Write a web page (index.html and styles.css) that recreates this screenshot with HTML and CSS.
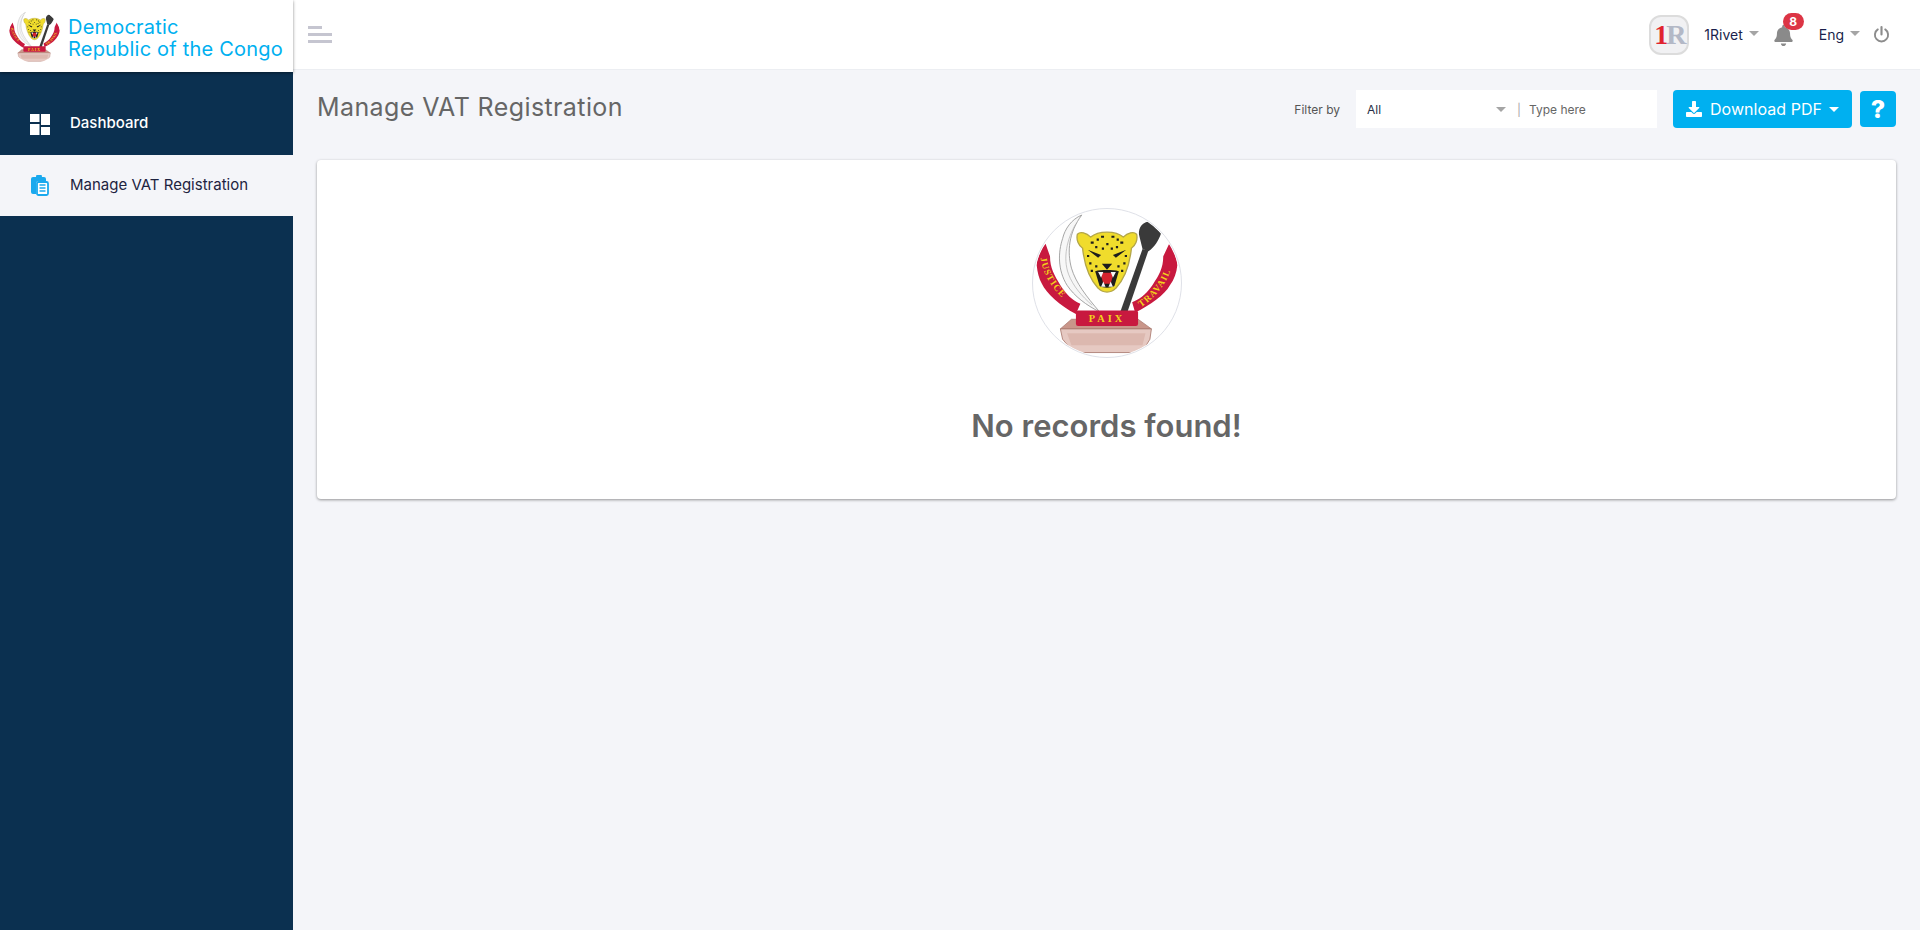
FILE: index.html
```html
<!DOCTYPE html>
<html lang="en">
<head>
<meta charset="utf-8">
<title>Manage VAT Registration</title>
<link rel="stylesheet" href="styles.css">
</head>
<body>
<svg class="defs" width="0" height="0" aria-hidden="true">
  <defs>
    <clipPath id="emblem-clip"><circle cx="100" cy="100" r="99"/></clipPath>
    <path id="justice-line" d="M10 60C10 85 26 112 58 136"/>
    <path id="travail-line" d="M141 136C170 118 190 90 190 60"/>
    <symbol id="emblem" viewBox="0 0 200 200">
      <g clip-path="url(#emblem-clip)">
        <path d="M66 8C52 14 43 27 40 40C34 58 33 82 46 103C56 118 72 130 90 139C72 118 58 100 52 80C46 58 48 32 66 8Z" fill="#f7f7f7" stroke="#9b9b9b" stroke-width="1.200"/>
        <path d="M58 20C46 40 40 66 48 88C54 104 66 118 80 130" fill="none" stroke="#b5b5b5" stroke-width="1"/>
        <path d="M118 139L148 54L156 56L127 141Z" fill="#3a3a3a"/>
        <path d="M156 17C146 19 141 28 144 38L148 54L156 57C164 52 170 42 173 33C168 28 163 21 156 17Z" fill="#3a3a3a"/>
        <path d="M17 47C10 55 6 65 5 76C6 86 8 94 12 101C18 114 36 130 58 142L64 128C52 123 45 115 37 103C29 90 23 80 23 64Z" fill="#c8193f"/>
        <path d="M184 47C190 55 194 65 195 76C194 86 191 95 185 103C178 116 158 130 138 140L134 126C148 120 155 112 162 102C170 90 176 80 176 64Z" fill="#c8193f"/>
        <path d="M60 34C64 30 72 32 78 38C88 29 112 29 122 38C128 32 136 30 140 34C142 42 138 50 133 53C131 72 126 92 112 107C106 114 94 114 88 107C75 93 69 72 67 53C62 50 58 42 60 34Z" fill="#f0dc2c" stroke="#b3a64a" stroke-width="1.800"/>
        <path d="M74 55L92 62L88 66ZM126 55L108 62L112 66ZM93 74H107L100 82Z" fill="#1d1d1d"/>
        <path d="M78 44h4v3h-4zM86 40h3v3h-3zM92 36h4v3h-4zM106 36h4v3h-4zM113 40h3v3h-3zM118 44h4v3h-4zM84 50h3v3h-3zM112 50h3v3h-3zM99 46h3v3h-3zM93 52h3v3h-3zM105 52h3v3h-3zM76 72h3v3h-3zM122 72h3v3h-3zM84 76h3v3h-3zM114 76h3v3h-3zM73 62h3v3h-3zM124 62h3v3h-3zM78 82h3v3h-3zM119 82h3v3h-3z" fill="#1d1d1d"/>
        <path d="M84 84C92 82 108 82 116 84L110 104C105 107 95 107 90 104Z" fill="#1d1d1d"/>
        <path d="M91 86H109L105 101H95Z" fill="#d3222e"/>
        <path d="M88 85l4 8 3-8zM112 85l-4 8-3-8zM92 105l3-7 3 7zM108 105l-3-7-3 7z" fill="#f5f5f5"/>
        <path d="M52 149L37 162H160L142 149Z" fill="#c9968a" stroke="#a8766c" stroke-width="1"/>
        <path d="M37 162H160L158 176L147 194H55L40 176Z" fill="#e6c9c2" stroke="#ad7d73" stroke-width="1.200"/>
        <path d="M46 168H152L148 184H52Z" fill="#dcb8af"/>
        <rect x="58" y="137" width="84" height="21" rx="3" fill="#c8193f"/>
        <text x="100" y="153" class="emblem-paix">PAIX</text>
        <text class="emblem-word"><textPath href="#justice-line" startOffset="6">JUSTICE</textPath></text>
        <text class="emblem-word"><textPath href="#travail-line" startOffset="6">TRAVAIL</textPath></text>
      </g>
    </symbol>
  </defs>
</svg>
<div class="app">
  <aside class="sidebar">
    <div class="brand">
      <svg class="brand-logo"><use href="#emblem"/></svg>
      <div class="brand-name">Democratic<br>Republic of the Congo</div>
    </div>
    <nav class="nav">
      <a class="nav-item">
        <svg class="nav-icon" viewBox="0 0 20 21"><path d="M0 0h9.500v8H0zM0 10h9.500v11H0zM11 0h9v11h-9zM11 13h9v8h-9z" fill="#fff"/></svg>
        <span class="nav-label nav-label-strong">Dashboard</span>
      </a>
      <a class="nav-item nav-item-active">
        <svg class="nav-icon" viewBox="0 0 20 21"><path d="M3 2h3a3 3 0 0 1 6 0h2a2 2 0 0 1 2 2v2H9a3 3 0 0 0-3 3v10H3a2 2 0 0 1-2-2V4a2 2 0 0 1 2-2Z" fill="#1aa9ee"/><rect x="7" y="7" width="11" height="13" rx="1.500" fill="#fff" stroke="#1aa9ee" stroke-width="1.800"/><path d="M9.500 10h6M9.500 13h6M9.500 16h6" stroke="#1aa9ee" stroke-width="1.500"/></svg>
        <span class="nav-label">Manage VAT Registration</span>
      </a>
    </nav>
  </aside>
  <div class="main">
    <header class="topbar">
      <button class="burger" aria-label="Menu"><i class="bar bar-short"></i><i class="bar"></i><i class="bar"></i></button>
      <div class="top-right">
        <div class="avatar"><span class="avatar-one">1</span><span class="avatar-r">R</span></div>
        <div class="user">1Rivet<i class="caret caret-grey"></i></div>
        <div class="bell">
          <svg class="bell-icon" viewBox="0 0 448 512"><path d="M224 512c35.300 0 64-28.700 64-64H160c0 35.300 28.700 64 64 64zm215.400-149.700c-19.300-20.800-55.500-52-55.500-154.300 0-77.700-54.500-139.900-127.900-155.200V32c0-17.700-14.300-32-32-32s-32 14.300-32 32v20.800C118.600 68.100 64.100 130.300 64.100 208c0 102.300-36.200 133.500-55.500 154.300-6 6.400-8.700 14.100-8.600 21.700.1 16.400 13 32 32.100 32h383.800c19.100 0 32-15.600 32.100-32 .1-7.600-2.600-15.300-8.600-21.700z" fill="#8a8a8a"/></svg>
          <span class="badge">8</span>
        </div>
        <div class="lang">Eng<i class="caret caret-grey"></i></div>
        <svg class="power" viewBox="0 0 16 16"><path d="M8 1v7" stroke="#8c8c8c" stroke-width="2" stroke-linecap="round" fill="none"/><path d="M4.500 3.200a6.200 6.200 0 1 0 7 0" stroke="#8c8c8c" stroke-width="1.800" stroke-linecap="round" fill="none"/></svg>
      </div>
    </header>
    <main class="content">
      <div class="toolbar">
        <h1 class="title">Manage VAT Registration</h1>
        <div class="tools">
          <span class="filter-label">Filter by</span>
          <div class="filter">
            <span class="filter-value">All</span>
            <i class="caret caret-grey"></i>
            <span class="filter-sep">|</span>
            <span class="filter-input">Type here</span>
          </div>
          <button class="btn btn-download">
            <svg class="dl-icon" viewBox="0 0 512 512"><path d="M216 0h80c13.300 0 24 10.700 24 24v168h87.700c17.800 0 26.700 21.500 14.100 34.100L269.700 378.300c-7.500 7.500-19.800 7.500-27.300 0L90.100 226.100c-12.600-12.600-3.700-34.100 14.100-34.100H192V24c0-13.300 10.700-24 24-24zm296 376v112c0 13.300-10.700 24-24 24H24c-13.300 0-24-10.700-24-24V376c0-13.300 10.700-24 24-24h146.700l49 49c20.100 20.100 52.500 20.100 72.600 0l49-49H488c13.300 0 24 10.700 24 24z" fill="#fff"/></svg>
            Download PDF<i class="caret caret-white"></i>
          </button>
          <button class="btn btn-help">?</button>
        </div>
      </div>
      <section class="card">
        <svg class="card-emblem"><use href="#emblem"/></svg>
        <h2 class="empty">No records found!</h2>
      </section>
    </main>
  </div>
</div>
</body>
</html>
```

FILE: styles.css
```css
* { box-sizing: border-box; }
html, body { margin: 0; height: 100%; overflow: hidden; }
body { font-family: Inter, "Noto Sans", "Liberation Sans", sans-serif; background: #f4f5f9; color: #222; }
.defs { position: absolute; }
.app { display: flex; height: 930px; }

.sidebar { width: 293px; flex: none; background: #0b3050; }
.brand { height: 72px; background: #fff; display: flex; align-items: center; padding-left: 8px; box-shadow: 0 1px 3px rgba(0,0,0,.45); position: relative; }
.brand-logo { width: 53px; height: 53px; flex: none; }
.brand-name { margin-left: 7px; padding-top: 3px; color: #00b0f0; font-size: 20px; line-height: 22px; letter-spacing: .2px; white-space: nowrap; }
.nav { padding-top: 21px; display: flex; flex-direction: column; }
.nav-item { height: 62px; display: flex; align-items: center; padding-left: 30px; font-size: 15px; color: #1d2340; }
.nav-item:first-child { color: #fff; }
.nav-item-active { background: #f4f5f9; height: 61px; }
.nav-icon { width: 20px; height: 21px; margin-right: 20px; flex: none; }
.nav-label { padding-bottom: 3px; }
.nav-label-strong { font-weight: 500; }

.main { flex: 1; min-width: 0; display: flex; flex-direction: column; }
.topbar { height: 70px; background: #fff; border-bottom: 1px solid #eceef2; display: flex; align-items: center; justify-content: space-between; padding: 0 30px 0 15px; }
.burger { border: 0; background: none; padding: 0; width: 24px; height: 17px; display: flex; flex-direction: column; justify-content: space-between; }
.bar { display: block; width: 24px; height: 3px; background: #c5c5d0; }
.bar-short { width: 14px; }
.top-right { display: flex; align-items: center; }
.avatar { width: 40px; height: 40px; border-radius: 12px; border: 2px solid #dcdcdc; background: #f1f1f3; display: flex; align-items: center; justify-content: center; font-family: "Liberation Serif", serif; font-weight: 700; font-size: 28px; letter-spacing: -2px; }
.avatar-one { color: #e0232e; }
.avatar-r { color: #b3b8c6; }
.user, .lang { font-size: 14px; color: #1a1f4b; display: flex; align-items: center; }
.user { margin-left: 15px; }
.caret { display: inline-block; width: 0; height: 0; border-left: 5px solid transparent; border-right: 5px solid transparent; border-top: 5px solid #999; }
.caret-grey { border-top-color: #a5a5a5; }
.caret-white { border-top-color: #fff; margin-left: 7px; }
.user .caret, .lang .caret { margin-left: 6px; margin-top: -2px; }
.bell { position: relative; margin-left: 15px; width: 20px; height: 20px; }
.bell-icon { width: 19px; height: 21px; display: block; }
.badge { position: absolute; left: 9px; top: -12px; min-width: 21px; height: 17px; border-radius: 9px; background: #dc3545; color: #fff; font-size: 12px; font-weight: 700; line-height: 17px; text-align: center; }
.lang { margin-left: 25px; }
.power { width: 17px; height: 17px; margin-left: 13px; }

.content { padding: 20px 24px 0 24px; }
.toolbar { display: flex; align-items: center; justify-content: space-between; height: 38px; }
.title { margin: 0; padding-bottom: 4px; font-size: 25px; font-weight: 400; color: #666; letter-spacing: .4px; }
.tools { display: flex; align-items: center; }
.filter-label { font-size: 12px; color: #555; margin-right: 16px; }
.filter { width: 301px; height: 38px; background: #fff; display: flex; align-items: center; padding-left: 11px; font-size: 12px; }
.filter-value { color: #2a2f45; width: 129px; }
.filter-sep { color: #aaa; margin: 0 8px 0 11px; }
.filter-input { color: #666; }
.btn { border: 0; border-radius: 4px; background: #00b0f0; color: #fff; font-family: inherit; display: flex; align-items: center; justify-content: center; padding: 0; }
.btn-download { width: 179px; height: 38px; margin-left: 16px; font-size: 16px; letter-spacing: .05px; }
.dl-icon { width: 16px; height: 16px; margin-right: 8px; }
.btn-help { width: 36px; height: 36px; margin-left: 8px; font-size: 25px; font-weight: 800; }
.card { margin-top: 32px; height: 339px; background: #fff; border-radius: 4px; box-shadow: 0 1px 3px rgba(0,0,0,.4); display: flex; flex-direction: column; align-items: center; padding-top: 48px; }
.card-emblem { width: 150px; height: 150px; border-radius: 50%; border: 1px solid #dfe1e8; display: block; flex: none; }
.empty { margin: 48px 0 0; font-size: 31px; font-weight: 600; color: #666; line-height: 40px; }
.emblem-paix { font-family: "Liberation Serif", serif; font-size: 14px; font-weight: 700; fill: #f2d21a; text-anchor: middle; letter-spacing: 4px; }
.emblem-word { font-family: "Liberation Serif", serif; font-size: 12.500px; font-weight: 700; fill: #f2d21a; letter-spacing: 1.500px; }
```
